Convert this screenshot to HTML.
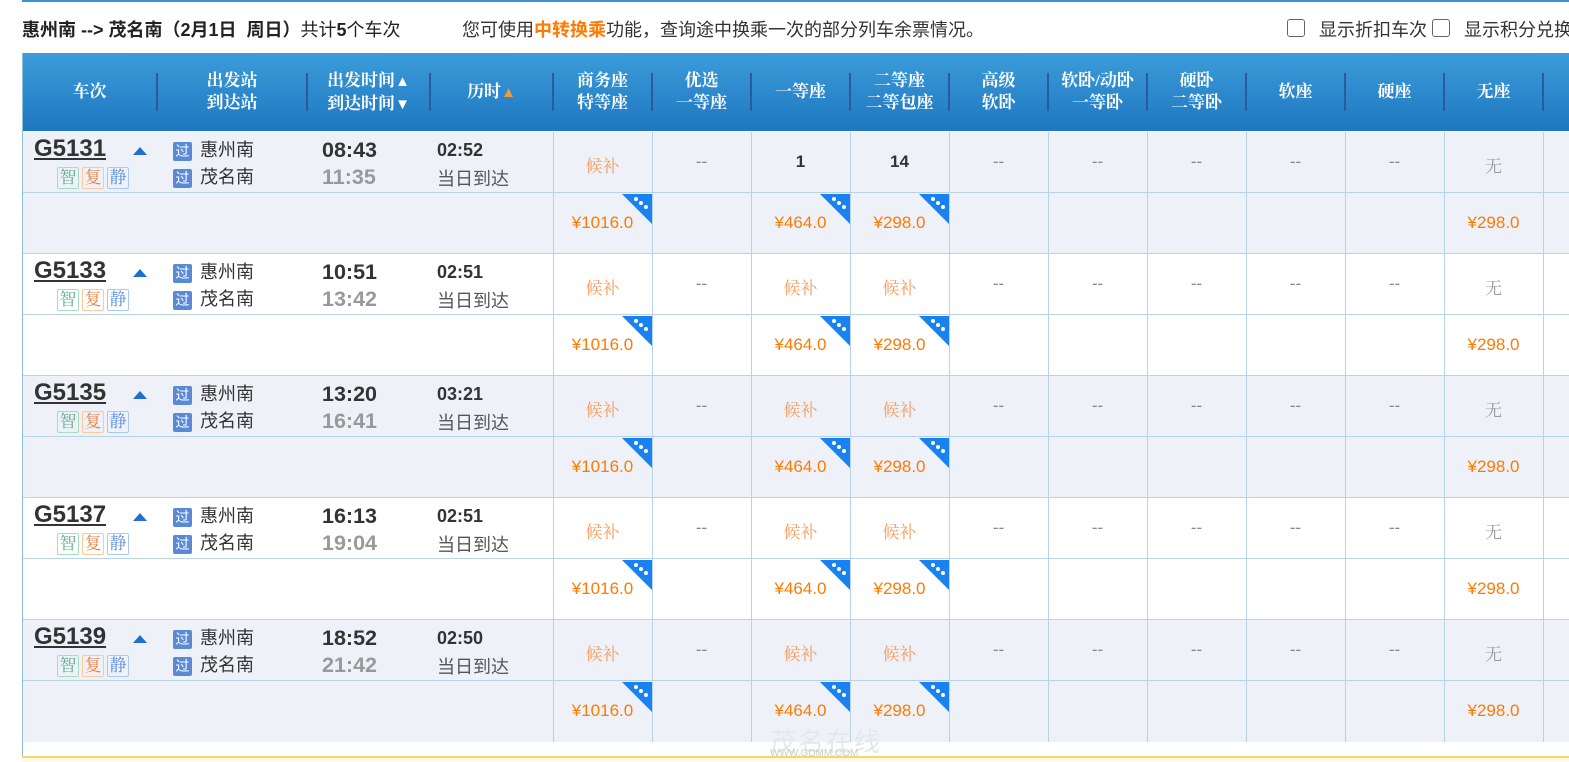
<!DOCTYPE html>
<html><head><meta charset="utf-8"><style>
*{margin:0;padding:0;box-sizing:border-box}
body{width:1569px;height:762px;overflow:hidden;background:#fff;position:relative;font-family:"Liberation Sans","Noto Sans CJK SC",sans-serif;color:#333}
.a{position:absolute;white-space:nowrap}
.hdr{position:absolute;left:22px;top:53px;width:1560px;height:78px;background:linear-gradient(#3c9cd9,#1e77c0);}
.ht{position:absolute;color:#fff;font-family:"Liberation Serif","Noto Serif CJK SC",serif;font-weight:bold;font-size:17px;line-height:22px;text-align:center}
.sep{position:absolute;top:20px;width:2px;height:38px;background:#2c5a9e}
.row{position:absolute;left:22px;width:1560px;height:61px;border-bottom:1px solid #b8d2e8}
.sh{background:#eef1f8}
.vl{position:absolute;top:132px;width:1px;height:610px;background:#b8d2e8}
.c{position:absolute;width:99px;text-align:center;font-size:17px}
.hb{color:#f79a5a;font-family:"Liberation Serif","Noto Serif CJK SC",serif}
.dd{color:#888}
.wu{color:#999;font-family:"Liberation Serif","Noto Serif CJK SC",serif}
.pr{color:#ff7a00}
.tri{position:absolute;width:0;height:0;border-top:30px solid #1a82f0;border-left:30px solid transparent}
.dot{position:absolute;width:4px;height:4px;border-radius:2px;background:#fff}
.tn{position:absolute;left:34px;font-size:24px;font-weight:bold;color:#333;text-decoration:underline}
.up{position:absolute;left:133px;width:0;height:0;border-left:7px solid transparent;border-right:7px solid transparent;border-bottom:8px solid #1f6fd0}
.bd{position:absolute;width:22px;height:22px;border:1px solid;border-radius:2px;font-size:17px;line-height:20px;text-align:center;font-family:"Liberation Serif","Noto Serif CJK SC",serif}
.gu{position:absolute;left:173px;width:19px;height:19px;background:#5a8ad6;color:#fff;font-size:14px;line-height:19px;text-align:center;border-radius:2px}
.st{position:absolute;left:200px;font-size:18px;color:#333;line-height:22px}
.t1{position:absolute;left:322px;font-size:21.5px;font-weight:bold;color:#333}
.t2{position:absolute;left:322px;font-size:21.5px;font-weight:bold;color:#999}
.d1{position:absolute;left:437px;font-size:18px;font-weight:bold;color:#333}
.d2{position:absolute;left:437px;font-size:18px;color:#555}
</style></head><body>
<div class="a" style="left:22px;top:0;width:1547px;height:2px;background:#3d92d4"></div>
<div class="a" style="left:22px;top:16px;font-size:18px;font-weight:bold;color:#222">惠州南 --&gt; 茂名南（2月1日&nbsp; 周日）<span style="font-weight:normal">共计</span>5<span style="font-weight:normal">个车次</span></div>
<div class="a" style="left:462px;top:16px;font-size:18px;color:#333">您可使用<span style="color:#ff7a00;font-weight:bold">中转换乘</span>功能，查询途中换乘一次的部分列车余票情况。</div>
<div class="a" style="left:1287px;top:19px;width:18px;height:18px;border:1.5px solid #666;border-radius:3px"></div>
<div class="a" style="left:1319px;top:16px;font-size:18px;color:#333">显示折扣车次</div>
<div class="a" style="left:1432px;top:19px;width:18px;height:18px;border:1.5px solid #666;border-radius:3px"></div>
<div class="a" style="left:1464px;top:16px;font-size:18px;color:#333">显示积分兑换</div>

<div class="hdr">
<div class="ht" style="left:0;width:135px;top:28px">车次</div>
<div class="sep" style="left:134px"></div>
<div class="ht" style="left:135px;width:150px;top:17px">出发站<br>到达站</div>
<div class="sep" style="left:284px"></div>
<div class="ht" style="left:285px;width:123px;top:17px">出发时间<span style="font-size:15px">▲</span><br>到达时间<span style="font-size:15px">▼</span></div>
<div class="sep" style="left:407px"></div>
<div class="ht" style="left:408px;width:123px;top:28px">历时<span style="font-size:15px;color:#f39a3a">▲</span></div>
<div class="sep" style="left:530px"></div>
<div class="ht" style="left:531px;width:99px;top:17px">商务座<br>特等座</div>
<div class="sep" style="left:629px"></div>
<div class="ht" style="left:630px;width:99px;top:17px">优选<br>一等座</div>
<div class="sep" style="left:728px"></div>
<div class="ht" style="left:729px;width:99px;top:28px">一等座</div>
<div class="sep" style="left:827px"></div>
<div class="ht" style="left:828px;width:99px;top:17px">二等座<br>二等包座</div>
<div class="sep" style="left:926px"></div>
<div class="ht" style="left:927px;width:99px;top:17px">高级<br>软卧</div>
<div class="sep" style="left:1025px"></div>
<div class="ht" style="left:1026px;width:99px;top:17px">软卧/动卧<br>一等卧</div>
<div class="sep" style="left:1124px"></div>
<div class="ht" style="left:1125px;width:99px;top:17px">硬卧<br>二等卧</div>
<div class="sep" style="left:1223px"></div>
<div class="ht" style="left:1224px;width:99px;top:28px">软座</div>
<div class="sep" style="left:1322px"></div>
<div class="ht" style="left:1323px;width:99px;top:28px">硬座</div>
<div class="sep" style="left:1421px"></div>
<div class="ht" style="left:1422px;width:99px;top:28px">无座</div>
<div class="sep" style="left:1520px"></div>
</div>

<div class="row sh" style="top:132px"></div><div class="row sh" style="top:193px"></div>
<div class="row" style="top:254px"></div><div class="row" style="top:315px"></div>
<div class="row sh" style="top:376px"></div><div class="row sh" style="top:437px"></div>
<div class="row" style="top:498px"></div><div class="row" style="top:559px"></div>
<div class="row sh" style="top:620px"></div><div class="row sh" style="top:681px;border-bottom:none"></div>

<div class="vl" style="left:553px"></div><div class="vl" style="left:652px"></div><div class="vl" style="left:751px"></div><div class="vl" style="left:850px"></div><div class="vl" style="left:949px"></div><div class="vl" style="left:1048px"></div><div class="vl" style="left:1147px"></div><div class="vl" style="left:1246px"></div><div class="vl" style="left:1345px"></div><div class="vl" style="left:1444px"></div><div class="vl" style="left:1543px"></div>
<div class="a" style="left:22px;top:53px;width:1px;height:709px;background:#8fbde0"></div>

<div class="a" style="left:22px;top:756px;width:1547px;height:6px;background:#fffbe6;border-top:2px solid #f5d86a"></div>

<!-- T1 -->
<div class="tn" style="top:135px">G5131</div><div class="up" style="top:147px"></div>
<div class="bd" style="left:57px;top:167px;color:#5cb08a;border-color:#a8dcc0">智</div><div class="bd" style="left:82px;top:167px;color:#f07a3a;border-color:#fbc99a">复</div><div class="bd" style="left:107px;top:167px;color:#5a8ee0;border-color:#a9c8f5">静</div>
<div class="gu" style="top:142px">过</div><div class="st" style="top:139px">惠州南</div>
<div class="gu" style="top:169px">过</div><div class="st" style="top:166px">茂名南</div>
<div class="t1" style="top:138px">08:43</div><div class="t2" style="top:165px">11:35</div>
<div class="d1" style="top:140px">02:52</div><div class="d2" style="top:165px">当日到达</div>
<div class="c hb" style="left:553px;top:152px">候补</div><div class="c dd" style="left:652px;top:152px">--</div><div class="c" style="left:751px;top:152px;font-weight:bold">1</div><div class="c" style="left:850px;top:152px;font-weight:bold">14</div><div class="c dd" style="left:949px;top:152px">--</div><div class="c dd" style="left:1048px;top:152px">--</div><div class="c dd" style="left:1147px;top:152px">--</div><div class="c dd" style="left:1246px;top:152px">--</div><div class="c dd" style="left:1345px;top:152px">--</div><div class="c wu" style="left:1444px;top:152px">无</div>
<div class="c pr" style="left:553px;top:213px">¥1016.0</div><div class="c pr" style="left:751px;top:213px">¥464.0</div><div class="c pr" style="left:850px;top:213px">¥298.0</div><div class="c pr" style="left:1444px;top:213px">¥298.0</div>
<!-- T2 -->
<div class="tn" style="top:257px">G5133</div><div class="up" style="top:269px"></div>
<div class="bd" style="left:57px;top:289px;color:#5cb08a;border-color:#a8dcc0">智</div><div class="bd" style="left:82px;top:289px;color:#f07a3a;border-color:#fbc99a">复</div><div class="bd" style="left:107px;top:289px;color:#5a8ee0;border-color:#a9c8f5">静</div>
<div class="gu" style="top:264px">过</div><div class="st" style="top:261px">惠州南</div>
<div class="gu" style="top:291px">过</div><div class="st" style="top:288px">茂名南</div>
<div class="t1" style="top:260px">10:51</div><div class="t2" style="top:287px">13:42</div>
<div class="d1" style="top:262px">02:51</div><div class="d2" style="top:287px">当日到达</div>
<div class="c hb" style="left:553px;top:274px">候补</div><div class="c dd" style="left:652px;top:274px">--</div><div class="c hb" style="left:751px;top:274px">候补</div><div class="c hb" style="left:850px;top:274px">候补</div><div class="c dd" style="left:949px;top:274px">--</div><div class="c dd" style="left:1048px;top:274px">--</div><div class="c dd" style="left:1147px;top:274px">--</div><div class="c dd" style="left:1246px;top:274px">--</div><div class="c dd" style="left:1345px;top:274px">--</div><div class="c wu" style="left:1444px;top:274px">无</div>
<div class="c pr" style="left:553px;top:335px">¥1016.0</div><div class="c pr" style="left:751px;top:335px">¥464.0</div><div class="c pr" style="left:850px;top:335px">¥298.0</div><div class="c pr" style="left:1444px;top:335px">¥298.0</div>
<!-- T3 -->
<div class="tn" style="top:379px">G5135</div><div class="up" style="top:391px"></div>
<div class="bd" style="left:57px;top:411px;color:#5cb08a;border-color:#a8dcc0">智</div><div class="bd" style="left:82px;top:411px;color:#f07a3a;border-color:#fbc99a">复</div><div class="bd" style="left:107px;top:411px;color:#5a8ee0;border-color:#a9c8f5">静</div>
<div class="gu" style="top:386px">过</div><div class="st" style="top:383px">惠州南</div>
<div class="gu" style="top:413px">过</div><div class="st" style="top:410px">茂名南</div>
<div class="t1" style="top:382px">13:20</div><div class="t2" style="top:409px">16:41</div>
<div class="d1" style="top:384px">03:21</div><div class="d2" style="top:409px">当日到达</div>
<div class="c hb" style="left:553px;top:396px">候补</div><div class="c dd" style="left:652px;top:396px">--</div><div class="c hb" style="left:751px;top:396px">候补</div><div class="c hb" style="left:850px;top:396px">候补</div><div class="c dd" style="left:949px;top:396px">--</div><div class="c dd" style="left:1048px;top:396px">--</div><div class="c dd" style="left:1147px;top:396px">--</div><div class="c dd" style="left:1246px;top:396px">--</div><div class="c dd" style="left:1345px;top:396px">--</div><div class="c wu" style="left:1444px;top:396px">无</div>
<div class="c pr" style="left:553px;top:457px">¥1016.0</div><div class="c pr" style="left:751px;top:457px">¥464.0</div><div class="c pr" style="left:850px;top:457px">¥298.0</div><div class="c pr" style="left:1444px;top:457px">¥298.0</div>
<!-- T4 -->
<div class="tn" style="top:501px">G5137</div><div class="up" style="top:513px"></div>
<div class="bd" style="left:57px;top:533px;color:#5cb08a;border-color:#a8dcc0">智</div><div class="bd" style="left:82px;top:533px;color:#f07a3a;border-color:#fbc99a">复</div><div class="bd" style="left:107px;top:533px;color:#5a8ee0;border-color:#a9c8f5">静</div>
<div class="gu" style="top:508px">过</div><div class="st" style="top:505px">惠州南</div>
<div class="gu" style="top:535px">过</div><div class="st" style="top:532px">茂名南</div>
<div class="t1" style="top:504px">16:13</div><div class="t2" style="top:531px">19:04</div>
<div class="d1" style="top:506px">02:51</div><div class="d2" style="top:531px">当日到达</div>
<div class="c hb" style="left:553px;top:518px">候补</div><div class="c dd" style="left:652px;top:518px">--</div><div class="c hb" style="left:751px;top:518px">候补</div><div class="c hb" style="left:850px;top:518px">候补</div><div class="c dd" style="left:949px;top:518px">--</div><div class="c dd" style="left:1048px;top:518px">--</div><div class="c dd" style="left:1147px;top:518px">--</div><div class="c dd" style="left:1246px;top:518px">--</div><div class="c dd" style="left:1345px;top:518px">--</div><div class="c wu" style="left:1444px;top:518px">无</div>
<div class="c pr" style="left:553px;top:579px">¥1016.0</div><div class="c pr" style="left:751px;top:579px">¥464.0</div><div class="c pr" style="left:850px;top:579px">¥298.0</div><div class="c pr" style="left:1444px;top:579px">¥298.0</div>
<!-- T5 -->
<div class="tn" style="top:623px">G5139</div><div class="up" style="top:635px"></div>
<div class="bd" style="left:57px;top:655px;color:#5cb08a;border-color:#a8dcc0">智</div><div class="bd" style="left:82px;top:655px;color:#f07a3a;border-color:#fbc99a">复</div><div class="bd" style="left:107px;top:655px;color:#5a8ee0;border-color:#a9c8f5">静</div>
<div class="gu" style="top:630px">过</div><div class="st" style="top:627px">惠州南</div>
<div class="gu" style="top:657px">过</div><div class="st" style="top:654px">茂名南</div>
<div class="t1" style="top:626px">18:52</div><div class="t2" style="top:653px">21:42</div>
<div class="d1" style="top:628px">02:50</div><div class="d2" style="top:653px">当日到达</div>
<div class="c hb" style="left:553px;top:640px">候补</div><div class="c dd" style="left:652px;top:640px">--</div><div class="c hb" style="left:751px;top:640px">候补</div><div class="c hb" style="left:850px;top:640px">候补</div><div class="c dd" style="left:949px;top:640px">--</div><div class="c dd" style="left:1048px;top:640px">--</div><div class="c dd" style="left:1147px;top:640px">--</div><div class="c dd" style="left:1246px;top:640px">--</div><div class="c dd" style="left:1345px;top:640px">--</div><div class="c wu" style="left:1444px;top:640px">无</div>
<div class="c pr" style="left:553px;top:701px">¥1016.0</div><div class="c pr" style="left:751px;top:701px">¥464.0</div><div class="c pr" style="left:850px;top:701px">¥298.0</div><div class="c pr" style="left:1444px;top:701px">¥298.0</div>

<!-- corner triangles with dots -->
<svg class="a" style="left:0;top:0" width="1569" height="762">
<defs><g id="t"><path d="M0 0H30V30Z" fill="#1a82f0"/><circle cx="14" cy="5" r="2" fill="#fff"/><circle cx="19" cy="9" r="2" fill="#fff"/><circle cx="24" cy="13" r="2" fill="#fff"/></g></defs>
<use href="#t" x="622" y="194"/><use href="#t" x="820" y="194"/><use href="#t" x="919" y="194"/>
<use href="#t" x="622" y="316"/><use href="#t" x="820" y="316"/><use href="#t" x="919" y="316"/>
<use href="#t" x="622" y="438"/><use href="#t" x="820" y="438"/><use href="#t" x="919" y="438"/>
<use href="#t" x="622" y="560"/><use href="#t" x="820" y="560"/><use href="#t" x="919" y="560"/>
<use href="#t" x="622" y="682"/><use href="#t" x="820" y="682"/><use href="#t" x="919" y="682"/>
</svg>

<div class="a" style="left:770px;top:722px;font-size:26px;color:#e4e8ee;letter-spacing:2px">茂名在线</div>
<div class="a" style="left:770px;top:748px;font-size:10px;color:#ccc">WWW.GDMM.COM</div>
</body></html>
